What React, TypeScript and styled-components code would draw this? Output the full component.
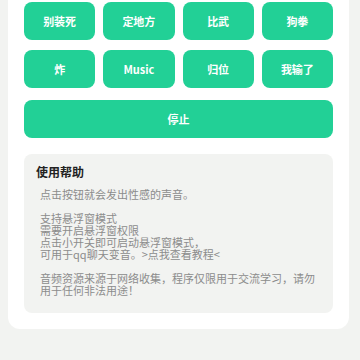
import React from "react";
import styled, { createGlobalStyle } from "styled-components";

const GlobalStyle = createGlobalStyle`
  html, body {
    margin: 0;
    padding: 0;
    background: #f2f3f1;
    font-family: "Noto Sans CJK SC", "Noto Sans", sans-serif;
  }
`;

const Page = styled.div`
  padding: 0 11px 0 8px;
  height: 360px;
  overflow: hidden;
`;

const Card = styled.div`
  margin-top: -14px;
  background: #ffffff;
  border-radius: 12px;
  padding: 16px 16px 16px;
  display: flex;
  flex-direction: column;
`;

const ButtonGrid = styled.div`
  display: grid;
  grid-template-columns: repeat(4, 1fr);
  column-gap: 8px;
  row-gap: 10px;
`;

const SoundButton = styled.button<{ $wide?: boolean }>`
  height: 38px;
  border: none;
  border-radius: 8px;
  background: #22d096;
  color: #ffffff;
  font-family: inherit;
  font-size: 11px;
  font-weight: 700;
  padding: 0;
  margin-top: ${(p) => (p.$wide ? "12px" : "0")};
  width: 100%;
`;

const HelpBox = styled.div`
  margin-top: 16px;
  background: #f2f3f1;
  border-radius: 8px;
  padding: 10px 16px 17px 12px;
`;

const HelpTitle = styled.div`
  font-size: 12px;
  line-height: 16px;
  font-weight: 700;
  color: #222222;
  margin-bottom: 8px;
`;

const HelpText = styled.p`
  margin: 0 0 12px;
  padding-left: 4px;
  font-size: 11px;
  line-height: 12px;
  color: #8c8c8c;
  &:last-child {
    margin-bottom: 0;
  }
`;

const sounds = ["别装死", "定地方", "比武", "狗拳", "炸", "Music", "归位", "我输了"];

export default function App() {
  return (
    <>
      <GlobalStyle />
      <Page>
        <Card>
          <ButtonGrid>
            {sounds.map((s) => (
              <SoundButton key={s}>{s}</SoundButton>
            ))}
          </ButtonGrid>
          <SoundButton $wide>停止</SoundButton>
          <HelpBox>
            <HelpTitle>使用帮助</HelpTitle>
            <HelpText>点击按钮就会发出性感的声音。</HelpText>
            <HelpText>
              支持悬浮窗模式
              <br />
              需要开启悬浮窗权限
              <br />
              点击小开关即可启动悬浮窗模式，
              <br />
              可用于qq聊天变音。&gt;点我查看教程&lt;
            </HelpText>
            <HelpText>音频资源来源于网络收集，程序仅限用于交流学习，请勿用于任何非法用途！</HelpText>
          </HelpBox>
        </Card>
      </Page>
    </>
  );
}
